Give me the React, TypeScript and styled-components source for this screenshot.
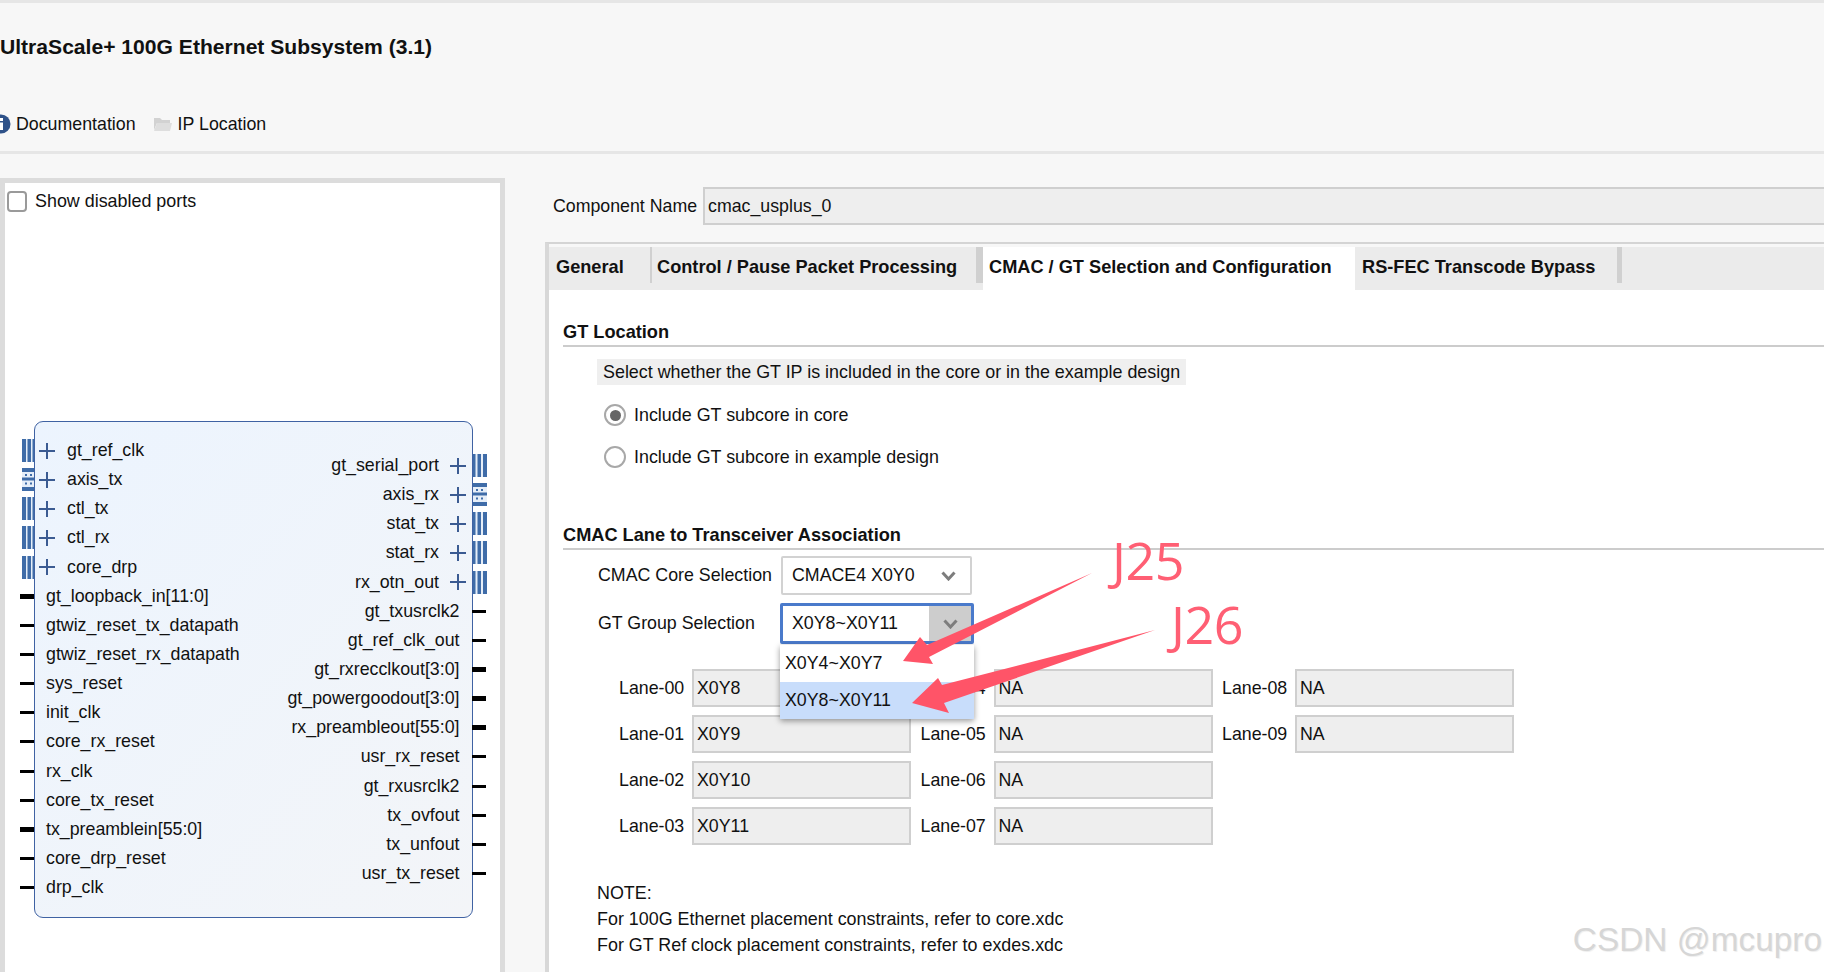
import React from "react";
import styled, { createGlobalStyle } from "styled-components";

const Global = createGlobalStyle`
  html, body { margin: 0; padding: 0; background: #f7f7f7; overflow: hidden; }
  * { box-sizing: border-box; }
`;

const Page = styled.div`
  position: relative;
  width: 1824px;
  height: 972px;
  overflow: hidden;
  background: #f7f7f7;
  color: #111;
  font-family: "Liberation Sans", Arial, sans-serif;
  font-size: 17.9px;
  display: flex;
  flex-direction: column;
`;

const Header = styled.header`
  flex: none;
  height: 154px;
  border-top: 3px solid #e6e6e6;
  border-bottom: 3px solid #e6e6e6;
  display: flex;
  flex-direction: column;
`;
const Title = styled.h1`
  margin: 32px 0 0;
  font-size: 21.1px;
  line-height: 24px;
  font-weight: 700;
`;
const DocLinks = styled.div`
  margin-top: 53px;
  display: flex;
  align-items: center;
  height: 24px;
  font-size: 17.8px;
`;
const DocLink = styled.span`
  display: inline-flex;
  align-items: center;
  gap: 6px;
  margin-right: 18px;
`;
const InfoIcon = styled.svg`
  margin-left: -9px;
  margin-right: -1px;
`;

const Body = styled.main`
  flex: 1;
  display: flex;
  min-height: 0;
`;

const SymbolPanel = styled.section`
  flex: none;
  width: 505px;
  margin-top: 24px;
  border: 5px solid #dcdcdc;
  border-bottom: none;
  background: #fff;
  padding: 8px 0 0 2px;
`;
const CheckRow = styled.label`
  display: flex;
  align-items: center;
  gap: 8px;
  height: 21px;
`;
const CheckBox = styled.span`
  width: 20px;
  height: 21px;
  border: 2px solid #9a9a9a;
  border-radius: 4px;
  background: #fff;
`;

const Block = styled.div`
  width: 439px;
  height: 497px;
  margin: 209px 0 0 27px;
  border: 1.5px solid #3f62a3;
  border-radius: 9px;
  background: linear-gradient(135deg, #ecf4fe 0%, #f3f5f8 100%);
  display: flex;
  justify-content: space-between;
  font-size: 17.8px;
`;
const PortColumn = styled.div<{ $top: number }>`
  display: flex;
  flex-direction: column;
  padding-top: ${(p) => p.$top}px;
`;
const PortRow = styled.div<{ $right?: boolean }>`
  height: 29.15px;
  display: flex;
  align-items: center;
  justify-content: ${(p) => (p.$right ? "flex-end" : "flex-start")};
  white-space: nowrap;
`;
const Stub = styled.span<{ $thick?: boolean; $right?: boolean }>`
  flex: none;
  width: 14px;
  height: ${(p) => (p.$thick ? 5 : 3)}px;
  background: #000;
  ${(p) => (p.$right ? "margin: 0 -14px 0 12.5px;" : "margin: 0 12px 0 -15px;")}
`;
const BusGlyph = styled.svg<{ $right?: boolean }>`
  flex: none;
  ${(p) => (p.$right ? "margin-right: -15px;" : "margin-left: -13px;")}
`;
const Expand = styled.svg<{ $right?: boolean }>`
  flex: none;
  ${(p) => (p.$right ? "margin: 0 7px 0 11px;" : "margin: 0 12px 0 5px;")}
`;

const Config = styled.section`
  flex: 1;
  min-width: 0;
  margin-left: 40px;
  display: flex;
  flex-direction: column;
`;
const NameRow = styled.div`
  margin-top: 33px;
  height: 38px;
  display: flex;
  align-items: center;
  padding-left: 8px;
  gap: 6px;
  font-size: 17.75px;
`;
const ValueBox = styled.div`
  flex: 1;
  height: 100%;
  background: #eeeeee;
  border: 2px solid #cfcfcf;
  border-right: none;
  display: flex;
  align-items: center;
  padding-left: 3px;
`;
const TabFrame = styled.div`
  flex: 1;
  margin-top: 17px;
  border-top: 2px solid #d4d4d4;
  border-left: 4px solid #d8d8d8;
  padding-top: 3px;
  display: flex;
  flex-direction: column;
`;
const TabBar = styled.nav`
  flex: none;
  height: 43px;
  background: #ebebeb;
  display: flex;
  align-items: flex-start;
`;
const Tab = styled.div<{ $w: number; $pad: number; $active?: boolean; $sep?: number }>`
  flex: none;
  width: ${(p) => p.$w}px;
  height: ${(p) => (p.$active ? 43 : 36)}px;
  padding-left: ${(p) => p.$pad}px;
  padding-top: 10px;
  line-height: 21px;
  font-size: 18.2px;
  font-weight: 700;
  white-space: nowrap;
  background: ${(p) => (p.$active ? "#fff" : "transparent")};
  border-right: ${(p) => (p.$sep ? `${p.$sep}px solid #d0d0d0` : "none")};
`;
const TabBody = styled.div`
  flex: 1;
  background: #fff;
  padding: 31px 0 0 14px;
  position: relative;
`;
const SectionHead = styled.h2<{ $mt?: number }>`
  margin: ${(p) => p.$mt ?? 0}px 0 0;
  height: 26px;
  line-height: 22px;
  font-size: 18.2px;
  font-weight: 700;
  border-bottom: 2px solid #cccccc;
`;
const Hint = styled.div`
  display: inline-block;
  margin: 12px 0 0 34px;
  height: 26px;
  line-height: 26px;
  padding: 0 6px;
  background: #efefef;
`;
const RadioGroup = styled.div`
  display: flex;
  flex-direction: column;
  gap: 20px;
  margin: 19px 0 0 41px;
`;
const RadioRow = styled.label`
  display: flex;
  align-items: center;
  gap: 8px;
  height: 22px;
`;
const RadioDot = styled.span<{ $on?: boolean }>`
  width: 22px;
  height: 22px;
  border-radius: 50%;
  border: 2px solid #a8a8a8;
  background: #fff;
  display: flex;
  align-items: center;
  justify-content: center;
  &::after {
    content: "";
    width: 11px;
    height: 11px;
    border-radius: 50%;
    background: ${(p) => (p.$on ? "#666" : "transparent")};
  }
`;
const SelectRow = styled.div<{ $mt: number }>`
  display: flex;
  align-items: center;
  margin: ${(p) => p.$mt}px 0 0 35px;
  font-size: 17.8px;
`;
const SelectLabel = styled.span`
  width: 183px;
  flex: none;
`;
const SelectBox = styled.div<{ $focus?: boolean }>`
  position: relative;
  flex: none;
  width: ${(p) => (p.$focus ? 194 : 191)}px;
  height: ${(p) => (p.$focus ? 41 : 39)}px;
  margin-left: ${(p) => (p.$focus ? -1 : 0)}px;
  background: #fff;
  border: ${(p) => (p.$focus ? "3px solid #4a7acb" : "2px solid #d2d2d2")};
  border-radius: 2px;
  display: flex;
  align-items: center;
  justify-content: space-between;
  padding-left: 9px;
`;
const Caret = styled.span<{ $focus?: boolean }>`
  align-self: stretch;
  width: ${(p) => (p.$focus ? 42 : 44)}px;
  background: ${(p) => (p.$focus ? "#cdcdcd" : "transparent")};
  display: flex;
  align-items: center;
  justify-content: center;
`;
const Popup = styled.div`
  position: absolute;
  left: -3px;
  top: 39px;
  width: 194px;
  background: #fff;
  box-shadow: 0 2px 6px rgba(0, 0, 0, 0.4);
  z-index: 2;
`;
const PopupItem = styled.div<{ $hi?: boolean }>`
  height: 37px;
  line-height: 37px;
  padding-left: 5px;
  background: ${(p) => (p.$hi ? "#c8ddfb" : "#fff")};
`;
const LaneGrid = styled.div`
  display: flex;
  gap: 9.5px;
  margin: 25px 0 0 56px;
  font-size: 17.8px;
`;
const LaneColumn = styled.div`
  display: flex;
  flex-direction: column;
  gap: 8px;
`;
const LaneRow = styled.div`
  display: flex;
  align-items: center;
  height: 38px;
`;
const LaneLabel = styled.span`
  flex: none;
  width: 73px;
  padding-top: 1px;
`;
const LaneValue = styled.div`
  width: 219px;
  height: 38px;
  background: #eeeeee;
  border: 2px solid #cfcfcf;
  display: flex;
  align-items: center;
  padding: 1px 0 0 3px;
`;
const Notes = styled.div`
  margin: 35px 0 0 34px;
  line-height: 26.1px;
`;
const Overlay = styled.svg`
  position: absolute;
  left: 0;
  top: 0;
  z-index: 3;
  pointer-events: none;
`;
const Callout = styled.span<{ $x: number; $y: number }>`
  position: absolute;
  left: ${(p) => p.$x}px;
  top: ${(p) => p.$y}px;
  z-index: 4;
  font-family: "Open Sans", sans-serif;
  font-weight: 400;
  font-size: 52px;
  line-height: 50px;
  letter-spacing: -0.5px;
  color: #ff5f74;
`;
const Watermark = styled.span`
  position: absolute;
  right: 2px;
  bottom: 13px;
  z-index: 4;
  font-size: 33.4px;
  line-height: 38px;
  color: #d6d6d6;
  text-shadow: 1px 1px 1px #eeeeee;
`;

const Plus = ({ right }: { right?: boolean }) => (
  <Expand $right={right} width="16" height="16" viewBox="0 0 16 16">
    <path d="M0 8h16M8 0v16" stroke="#3b5b92" strokeWidth="2" fill="none" />
  </Expand>
);

const Bus = ({ right, cross }: { right?: boolean; cross?: boolean }) => (
  <BusGlyph $right={right} width={right ? 14 : 12} height="23" viewBox={right ? "0 0 14 23" : "0 0 12 23"}>
    <rect width="14" height="23" fill="#e6eef8" />
    {cross ? (
      <g fill="#3f6ca8">
        <rect x="0" y="0" width="14" height="4" />
        <rect x="0" y="9.5" width="14" height="3" />
        <rect x="0" y="19" width="14" height="4" />
        <path d="M3 6h2v2H3zM8 6h2v2H8zM3 14.5h2v2H3zM8 14.5h2v2H8z" />
      </g>
    ) : right ? (
      <g fill="#3f6ca8">
        <rect x="0" width="2.5" height="23" />
        <rect x="4.5" width="3.5" height="23" />
        <rect x="10" width="4" height="23" />
      </g>
    ) : (
      <g fill="#3f6ca8">
        <rect x="0" width="4" height="23" />
        <rect x="5.5" width="3.5" height="23" />
        <rect x="10.5" width="1.5" height="23" />
      </g>
    )}
  </BusGlyph>
);

type Port = { name: string; bus?: boolean; cross?: boolean; thick?: boolean };

const leftPorts: Port[] = [
  { name: "gt_ref_clk", bus: true },
  { name: "axis_tx", bus: true, cross: true },
  { name: "ctl_tx", bus: true },
  { name: "ctl_rx", bus: true },
  { name: "core_drp", bus: true },
  { name: "gt_loopback_in[11:0]", thick: true },
  { name: "gtwiz_reset_tx_datapath" },
  { name: "gtwiz_reset_rx_datapath" },
  { name: "sys_reset" },
  { name: "init_clk" },
  { name: "core_rx_reset" },
  { name: "rx_clk" },
  { name: "core_tx_reset" },
  { name: "tx_preamblein[55:0]", thick: true },
  { name: "core_drp_reset" },
  { name: "drp_clk" },
];
const rightPorts: Port[] = [
  { name: "gt_serial_port", bus: true },
  { name: "axis_rx", bus: true, cross: true },
  { name: "stat_tx", bus: true },
  { name: "stat_rx", bus: true },
  { name: "rx_otn_out", bus: true },
  { name: "gt_txusrclk2" },
  { name: "gt_ref_clk_out" },
  { name: "gt_rxrecclkout[3:0]", thick: true },
  { name: "gt_powergoodout[3:0]", thick: true },
  { name: "rx_preambleout[55:0]", thick: true },
  { name: "usr_rx_reset" },
  { name: "gt_rxusrclk2" },
  { name: "tx_ovfout" },
  { name: "tx_unfout" },
  { name: "usr_tx_reset" },
];

const lanes: [string, string][][] = [
  [["Lane-00", "X0Y8"], ["Lane-01", "X0Y9"], ["Lane-02", "X0Y10"], ["Lane-03", "X0Y11"]],
  [["Lane-04", "NA"], ["Lane-05", "NA"], ["Lane-06", "NA"], ["Lane-07", "NA"]],
  [["Lane-08", "NA"], ["Lane-09", "NA"]],
];

const Chevron = () => (
  <svg width="15" height="10" viewBox="0 0 15 10">
    <path d="M1.5 1.5 7.5 8l6-6.5" stroke="#7d7d7d" strokeWidth="3" fill="none" />
  </svg>
);

export default function App() {
  return (
    <Page>
      <Global />
      <Header>
        <Title>UltraScale+ 100G Ethernet Subsystem (3.1)</Title>
        <DocLinks>
          <DocLink>
            <InfoIcon width="20" height="20" viewBox="0 0 20 20">
              <circle cx="10" cy="10" r="9.5" fill="#2f5289" />
              <rect x="9" y="4" width="3" height="3" fill="#fff" />
              <rect x="9" y="8.5" width="3" height="7.5" fill="#fff" />
            </InfoIcon>
            Documentation
          </DocLink>
          <DocLink>
            <svg width="18" height="16" viewBox="0 0 18 16">
              <path d="M0 2h6l2 2h8v3H3L0 14z" fill="#d2d2d2" />
              <path d="M3 7h15l-2 8H0z" fill="#dedede" />
            </svg>
            IP Location
          </DocLink>
        </DocLinks>
      </Header>
      <Body>
        <SymbolPanel>
          <CheckRow>
            <CheckBox />
            Show disabled ports
          </CheckRow>
          <Block>
            <PortColumn $top={14}>
              {leftPorts.map((p) => (
                <PortRow key={p.name}>
                  {p.bus ? (
                    <>
                      <Bus cross={p.cross} />
                      <Plus />
                    </>
                  ) : (
                    <Stub $thick={p.thick} />
                  )}
                  {p.name}
                </PortRow>
              ))}
            </PortColumn>
            <PortColumn $top={29}>
              {rightPorts.map((p) => (
                <PortRow key={p.name} $right>
                  {p.name}
                  {p.bus ? (
                    <>
                      <Plus right />
                      <Bus right cross={p.cross} />
                    </>
                  ) : (
                    <Stub $right $thick={p.thick} />
                  )}
                </PortRow>
              ))}
            </PortColumn>
          </Block>
        </SymbolPanel>
        <Config>
          <NameRow>
            Component Name
            <ValueBox>cmac_usplus_0</ValueBox>
          </NameRow>
          <TabFrame>
            <TabBar>
              <Tab $w={103} $pad={7} $sep={2}>General</Tab>
              <Tab $w={331} $pad={5} $sep={7}>Control / Pause Packet Processing</Tab>
              <Tab $w={372} $pad={6} $active>CMAC / GT Selection and Configuration</Tab>
              <Tab $w={267} $pad={7} $sep={5}>RS-FEC Transcode Bypass</Tab>
            </TabBar>
            <TabBody>
              <SectionHead>GT Location</SectionHead>
              <Hint>Select whether the GT IP is included in the core or in the example design</Hint>
              <RadioGroup>
                <RadioRow>
                  <RadioDot $on />
                  Include GT subcore in core
                </RadioRow>
                <RadioRow>
                  <RadioDot />
                  Include GT subcore in example design
                </RadioRow>
              </RadioGroup>
              <SectionHead $mt={56}>CMAC Lane to Transceiver Association</SectionHead>
              <SelectRow $mt={6}>
                <SelectLabel>CMAC Core Selection</SelectLabel>
                <SelectBox>
                  CMACE4 X0Y0
                  <Caret><Chevron /></Caret>
                </SelectBox>
              </SelectRow>
              <SelectRow $mt={8}>
                <SelectLabel>GT Group Selection</SelectLabel>
                <SelectBox $focus>
                  X0Y8~X0Y11
                  <Caret $focus><Chevron /></Caret>
                  <Popup>
                    <PopupItem>X0Y4~X0Y7</PopupItem>
                    <PopupItem $hi>X0Y8~X0Y11</PopupItem>
                  </Popup>
                </SelectBox>
              </SelectRow>
              <LaneGrid>
                {lanes.map((col, i) => (
                  <LaneColumn key={i}>
                    {col.map(([label, value]) => (
                      <LaneRow key={label}>
                        <LaneLabel>{label}</LaneLabel>
                        <LaneValue>{value}</LaneValue>
                      </LaneRow>
                    ))}
                  </LaneColumn>
                ))}
              </LaneGrid>
              <Notes>
                NOTE:
                <br />
                For 100G Ethernet placement constraints, refer to core.xdc
                <br />
                For GT Ref clock placement constraints, refer to exdes.xdc
              </Notes>
            </TabBody>
          </TabFrame>
        </Config>
      </Body>
      <Overlay width="1824" height="972" viewBox="0 0 1824 972">
        <polygon points="1092,573 927,645 920,637 903,661 933,664 929,657" fill="#ff5468" />
        <polygon points="1155,630 942,685 938,678 912,703 949,713 944,703" fill="#ff5468" />
      </Overlay>
      <Callout $x={1112} $y={535}>J25</Callout>
      <Callout $x={1171} $y={599}>J26</Callout>
      <Watermark>CSDN @mcupro</Watermark>
    </Page>
  );
}
